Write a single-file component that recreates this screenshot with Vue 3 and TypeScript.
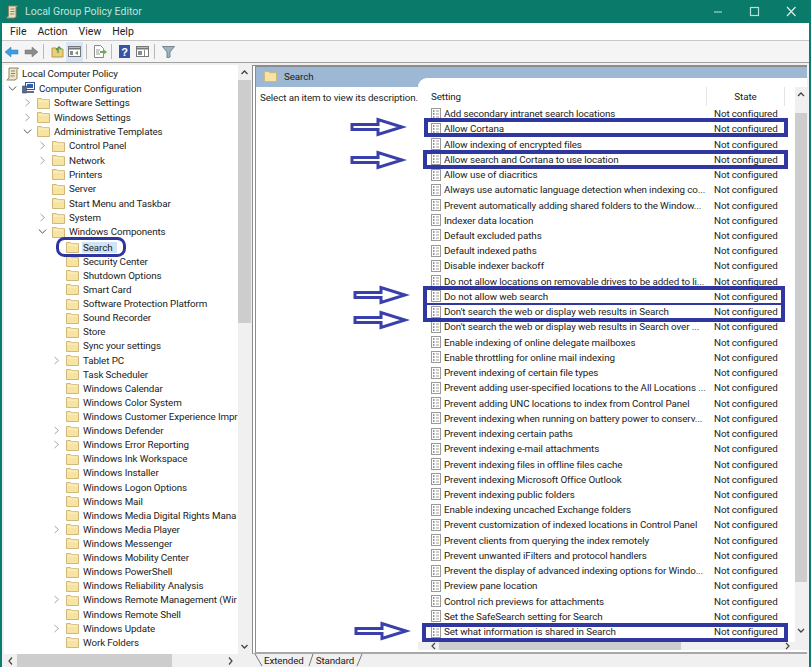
<script setup lang="ts">
interface TreeRow { label: string; depth: number; chevron?: 'open' | 'closed'; icon?: 'scroll' | 'pc' | 'folder'; selected?: boolean }
const closed = 'closed' as const
const open = 'open' as const
const tree: TreeRow[] = [
  { label: 'Local Computer Policy', depth: 0, icon: 'scroll' },
  { label: 'Computer Configuration', depth: 1, chevron: open, icon: 'pc' },
  { label: 'Software Settings', depth: 2, chevron: closed },
  { label: 'Windows Settings', depth: 2, chevron: closed },
  { label: 'Administrative Templates', depth: 2, chevron: open },
  { label: 'Control Panel', depth: 3, chevron: closed },
  { label: 'Network', depth: 3, chevron: closed },
  { label: 'Printers', depth: 3 },
  { label: 'Server', depth: 3 },
  { label: 'Start Menu and Taskbar', depth: 3 },
  { label: 'System', depth: 3, chevron: closed },
  { label: 'Windows Components', depth: 3, chevron: open },
  { label: 'Search', depth: 4, selected: true },
  { label: 'Security Center', depth: 4 },
  { label: 'Shutdown Options', depth: 4 },
  { label: 'Smart Card', depth: 4 },
  { label: 'Software Protection Platform', depth: 4 },
  { label: 'Sound Recorder', depth: 4 },
  { label: 'Store', depth: 4 },
  { label: 'Sync your settings', depth: 4 },
  { label: 'Tablet PC', depth: 4, chevron: closed },
  { label: 'Task Scheduler', depth: 4 },
  { label: 'Windows Calendar', depth: 4 },
  { label: 'Windows Color System', depth: 4 },
  { label: 'Windows Customer Experience Impr', depth: 4 },
  { label: 'Windows Defender', depth: 4, chevron: closed },
  { label: 'Windows Error Reporting', depth: 4, chevron: closed },
  { label: 'Windows Ink Workspace', depth: 4 },
  { label: 'Windows Installer', depth: 4 },
  { label: 'Windows Logon Options', depth: 4 },
  { label: 'Windows Mail', depth: 4 },
  { label: 'Windows Media Digital Rights Mana', depth: 4 },
  { label: 'Windows Media Player', depth: 4, chevron: closed },
  { label: 'Windows Messenger', depth: 4 },
  { label: 'Windows Mobility Center', depth: 4 },
  { label: 'Windows PowerShell', depth: 4 },
  { label: 'Windows Reliability Analysis', depth: 4 },
  { label: 'Windows Remote Management (Wir', depth: 4, chevron: closed },
  { label: 'Windows Remote Shell', depth: 4 },
  { label: 'Windows Update', depth: 4, chevron: closed },
  { label: 'Work Folders', depth: 4 },
]
const settings: string[] = [
  'Add secondary intranet search locations',
  'Allow Cortana',
  'Allow indexing of encrypted files',
  'Allow search and Cortana to use location',
  'Allow use of diacritics',
  'Always use automatic language detection when indexing co...',
  'Prevent automatically adding shared folders to the Window...',
  'Indexer data location',
  'Default excluded paths',
  'Default indexed paths',
  'Disable indexer backoff',
  'Do not allow locations on removable drives to be added to li...',
  'Do not allow web search',
  "Don't search the web or display web results in Search",
  "Don't search the web or display web results in Search over ...",
  'Enable indexing of online delegate mailboxes',
  'Enable throttling for online mail indexing',
  'Prevent indexing of certain file types',
  'Prevent adding user-specified locations to the All Locations ...',
  'Prevent adding UNC locations to index from Control Panel',
  'Prevent indexing when running on battery power to conserv...',
  'Prevent indexing certain paths',
  'Prevent indexing e-mail attachments',
  'Prevent indexing files in offline files cache',
  'Prevent indexing Microsoft Office Outlook',
  'Prevent indexing public folders',
  'Enable indexing uncached Exchange folders',
  'Prevent customization of indexed locations in Control Panel',
  'Prevent clients from querying the index remotely',
  'Prevent unwanted iFilters and protocol handlers',
  'Prevent the display of advanced indexing options for Windo...',
  'Preview pane location',
  'Control rich previews for attachments',
  'Set the SafeSearch setting for Search',
  'Set what information is shared in Search',
]
const arrows: [number, number][] = [[352, 127], [352, 160], [355, 295], [355, 320], [356, 631]]
const boxes: [number, number, number, number][] = [
  [426, 120, 360, 15],
  [425, 152, 361, 15],
  [425, 288, 358, 32],
  [424, 625, 362, 15],
]
</script>

<template>
  <div class="win">
    <header class="title">
      <svg class="ti" width="12" height="14" viewBox="0 0 12 14"><path d="M2.500 1h9L10 2.500v9L8.500 13H.5l2-2z" fill="#e8e0c0" stroke="#8d8666"/><path d="M4.500 4h4M4.500 6.500h4M4 9h4" stroke="#8d8666"/></svg>
      <span class="title-text">Local Group Policy Editor</span>
      <span class="grow"></span>
      <svg class="wb" width="46" height="22" viewBox="0 0 46 22"><path d="M37 11h8" stroke="#9fd4ca" stroke-width="1.200"/></svg>
      <svg class="wb" width="46" height="22" viewBox="0 0 46 22"><rect x="27.500" y="6.500" width="8" height="8" fill="none" stroke="#b5e0d8" stroke-width="1.200"/></svg>
      <svg class="wb" width="42" height="22" viewBox="0 0 42 22"><path d="M18 6l8.500 9M26.500 6L18 15" stroke="#d8efe9" stroke-width="1.200"/></svg>
    </header>
    <nav class="menu"><span>File</span><span>Action</span><span>View</span><span>Help</span></nav>
    <div class="toolbar">
      <svg class="t-back" width="14" height="12" viewBox="0 0 14 12"><path d="M0 6l6-5v3h7v4H6v3z" fill="#3f9ee0" stroke="#2a78b5" stroke-width=".5"/></svg>
      <svg class="t-fwd" width="14" height="12" viewBox="0 0 14 12"><path d="M14 6L8 1v3H1v4h7v3z" fill="#8c8c8c" stroke="#6e6e6e" stroke-width=".5"/></svg>
      <i class="sep s1"></i>
      <svg class="t-up" width="13" height="13" viewBox="0 0 13 13"><path d="M1 3h4l1 1h6v8H1z" fill="#eccf7c" stroke="#b89a4a"/><path d="M7 8V3M5 5l3-3 2 2" stroke="#3f9b4c" fill="none" stroke-width="1.300"/></svg>
      <span class="tb-active"><svg width="13" height="11" viewBox="0 0 13 11"><rect x=".5" y=".5" width="12" height="10" fill="#fff" stroke="#777"/><path d="M1 2.500h11" stroke="#777" stroke-width="2"/><rect x="2" y="5" width="3" height="4" fill="#889"/><path d="M10 5L7 7l3 2z" fill="#5a9a5a"/></svg></span>
      <i class="sep s2"></i>
      <svg class="t-doc" width="14" height="13" viewBox="0 0 14 13"><path d="M1.500.5h6l3 3v9h-9z" fill="#fff" stroke="#888"/><path d="M3 5h4M3 7h3M3 9h4" stroke="#999"/><path d="M7 6h3V4l4 3-4 3V8H7z" fill="#6cae53"/></svg>
      <i class="sep s3"></i>
      <svg class="t-help" width="11" height="13" viewBox="0 0 11 13"><rect width="11" height="13" fill="#3553a8"/><text x="5.500" y="10.500" text-anchor="middle" class="q">?</text></svg>
      <svg class="t-pane" width="13" height="11" viewBox="0 0 13 11"><rect x=".5" y=".5" width="12" height="10" fill="#fff" stroke="#777"/><path d="M1 2.500h11" stroke="#777" stroke-width="2"/><path d="M8.500 4v6" stroke="#888"/><rect x="2" y="5" width="4" height="4" fill="#889"/></svg>
      <i class="sep s4"></i>
      <svg class="t-filter" width="13" height="12" viewBox="0 0 13 12"><path d="M.5.500h12L8 6v5l-3 1V6z" fill="#9ab4c2" stroke="#62747e" stroke-width=".8"/></svg>
    </div>
    <main class="body">
      <aside class="left">
        <div class="tree-wrap">
          <div class="tree">
            <div v-for="r in tree" :key="r.label" class="trow" :class="'d' + r.depth">
              <span class="chev">
                <svg v-if="r.chevron === 'closed'" width="7" height="9" viewBox="0 0 7 9"><path d="M1.500 1l4 3.500-4 3.500" fill="none" stroke="#a6a6a6"/></svg>
                <svg v-else-if="r.chevron === 'open'" width="9" height="7" viewBox="0 0 9 7"><path d="M.8 1.500l3.700 3.700 3.700-3.700" fill="none" stroke="#555"/></svg>
              </span>
              <svg v-if="r.icon === 'scroll'" class="ic" width="13" height="14" viewBox="0 0 13 14"><path d="M3 1h9.500L11 2.500v9L9 13H.8L3 11z" fill="#ede6c8" stroke="#8b8468"/><path d="M5 4h4M5 6.500h4M4.500 9h4" stroke="#8b8468"/></svg>
              <svg v-else-if="r.icon === 'pc'" class="ic" width="13" height="12" viewBox="0 0 13 12"><rect x="3.500" y=".5" width="9" height="7" fill="#fff" stroke="#3b4f88"/><rect x="5" y="2" width="6" height="4" fill="#2b5fbd"/><path d="M.5 4h4v7h-4z" fill="#5a6a90" stroke="#2f3e66" stroke-width=".6"/><path d="M5 10h7" stroke="#5c6c98" stroke-width="2"/></svg>
              <svg v-else class="ic" width="13" height="12" viewBox="0 0 13 12"><path d="M.5 1.500h4l1 1.200h7v8.800H.5z" fill="#f7e4a2" stroke="#cfb878"/><path d="M1.500 4h10" stroke="#fdf4cf"/></svg>
              <span class="tlabel" :class="{ sel: r.selected }">{{ r.label }}</span>
            </div>
          </div>
          <div class="vs">
            <svg class="sa" width="11" height="11" viewBox="0 0 11 11"><path d="M2.500 7l3-3 3 3" fill="none" stroke="#444" stroke-width="1.300"/></svg>
            <div class="vtrack"><div class="vthumb left-thumb"></div></div>
            <svg class="sa" width="11" height="11" viewBox="0 0 11 11"><path d="M2.500 4l3 3 3-3" fill="none" stroke="#444" stroke-width="1.300"/></svg>
          </div>
        </div>
        <div class="hs">
          <svg class="sa" width="13" height="12" viewBox="0 0 13 12"><path d="M8 2.500L5 6l3 3.500" fill="none" stroke="#444" stroke-width="1.200"/></svg>
          <div class="htrack"><div class="hthumb"></div></div>
          <svg class="sa hs-next" width="13" height="12" viewBox="0 0 13 12"><path d="M5 2.500L8 6 5 9.500" fill="none" stroke="#444" stroke-width="1.200"/></svg>
        </div>
      </aside>
      <section class="right">
        <div class="pane">
          <div class="band">
            <svg class="bf" width="13" height="12" viewBox="0 0 13 12"><path d="M.5 1.500h4l1 1.200h7v8.800H.5z" fill="#f7e4a2" stroke="#cfb878"/></svg>
            <span>Search</span>
          </div>
          <div class="content">
            <div class="desc">Select an item to view its description.</div>
            <div class="list">
              <div class="lhead"><span class="hset">Setting</span><span class="hstate">State</span></div>
              <div class="lbody">
                <div class="rows">
                  <div v-for="s in settings" :key="s" class="row">
                    <svg class="pi" width="10" height="12" viewBox="0 0 10 12"><rect x=".5" y=".5" width="9" height="11" fill="#fff" stroke="#9a9a9a"/><path d="M2 3h1.500M2 6h1.500M2 9h1.500" stroke="#333"/><path d="M5 3h3M5 6h3M5 9h3" stroke="#999"/></svg>
                    <span class="sname">{{ s }}</span>
                    <span class="sstate">Not configured</span>
                  </div>
                </div>
                <div class="vs rvs">
                  <svg class="sa" width="12" height="11" viewBox="0 0 12 11"><path d="M3 7l3-3 3 3" fill="none" stroke="#444" stroke-width="1.300"/></svg>
                  <div class="vtrack"><div class="vthumb right-thumb"></div></div>
                  <svg class="sa" width="12" height="11" viewBox="0 0 12 11"><path d="M3 4l3 3 3-3" fill="none" stroke="#444" stroke-width="1.300"/></svg>
                </div>
              </div>
              <div class="lhs">
                <svg width="11" height="8" viewBox="0 0 11 8"><path d="M7 1L4 4l3 3" fill="none" stroke="#444" stroke-width="1.200"/></svg>
                <div class="lhthumb"></div>
                <span class="grow"></span>
                <svg class="lh-next" width="11" height="8" viewBox="0 0 11 8"><path d="M4 1l3 3-3 3" fill="none" stroke="#444" stroke-width="1.200"/></svg>
              </div>
            </div>
          </div>
        </div>
        <div class="tabs">
          <svg class="tabline" width="112" height="13" viewBox="0 0 112 13"><path d="M3 0l7 12M61 0l-4 12M110 0l-5 12" fill="none" stroke="#777"/></svg>
          <span class="tab t1">Extended</span><span class="tab t2">Standard</span>
        </div>
      </section>
    </main>
    <svg class="overlay" width="811" height="667" viewBox="0 0 811 667">
      <rect x="57.500" y="238.500" width="67" height="17" rx="7" fill="none" stroke="#2f349f" stroke-width="3"/>
      <rect v-for="(b, i) in boxes" :key="'b' + i" :x="b[0]" :y="b[1]" :width="b[2]" :height="b[3]" fill="none" stroke="#3137a1" stroke-width="4"/>
      <path d="M424 304h360" stroke="#3137a1" stroke-width="2"/>
      <path v-for="(a, i) in arrows" :key="'a' + i" :d="`M${a[0]} ${a[1] - 2.500}h26v-5l24 7.500-24 7.500v-5h-26z`" fill="#fff" stroke="#3a40ab" stroke-width="3"/>
    </svg>
  </div>
</template>

<style>
html, body { margin: 0; padding: 0; background: #fff; }
</style>

<style scoped>
.win { position: relative; width: 811px; height: 667px; overflow: hidden; display: flex; flex-direction: column; background: #f0f0f0; box-sizing: border-box; border-left: 2px solid #0b7d6f; border-right: 2px solid #0b7d6f; font-family: Roboto, sans-serif; font-size: 9.800px; letter-spacing: -0.100px; color: #222; }
.title { height: 23px; flex: none; background: #0a7b6b; display: flex; align-items: center; margin: 0 -2px 0 -2px; color: #bfe3dc; padding-left: 6px; }
.ti { margin-right: 7px; }
.title-text { font-size: 10.500px; letter-spacing: 0; }
.grow { flex: 1; }
.wb { flex: none; }
.menu { height: 17px; flex: none; background: #fff; display: flex; align-items: center; padding-left: 8px; border-bottom: 1px solid #c8c8c8; }
.menu span { margin-right: 11px; font-size: 10.500px; letter-spacing: 0; }
.toolbar { height: 21px; flex: none; background: #f5f5f5; display: flex; align-items: center; padding-left: 3px; border-bottom: 1px solid #a0a0a0; }
.t-fwd { margin-left: 5px; }
.s1 { margin-left: 5px; }
.t-up { margin-left: 7px; }
.tb-active { background: #d6e6f4; height: 20px; width: 17px; margin-left: 2px; display: flex; align-items: center; justify-content: center; }
.s2 { margin-left: 3px; }
.t-doc { margin-left: 6px; }
.s3 { margin-left: 4px; }
.t-help { margin-left: 7px; }
.t-pane { margin-left: 6px; }
.s4 { margin-left: 5px; }
.t-filter { margin-left: 7px; }
.sep { width: 1px; height: 15px; background: #b8b8b8; }
.q { font-size: 11px; font-weight: 700; fill: #fff; font-family: "Liberation Sans", sans-serif; }
.body { flex: 1; min-height: 0; display: flex; gap: 1px; background: #f0f0f0; }
.left { width: 247px; flex: none; margin: 2px 0 0 2px; background: #fff; display: flex; flex-direction: column; }
.tree-wrap { flex: 1; display: flex; min-height: 0; }
.tree { flex: 1; padding-top: 1.800px; min-width: 0; overflow: hidden; }
.trow { height: 14.120px; display: flex; align-items: center; white-space: nowrap; }
.trow:nth-child(-n+12) { height: 14.370px; }
.trow:nth-child(13) { margin-top: 1px; }
.chev { width: 14px; flex: none; display: flex; justify-content: center; margin-right: 3px; }
.d0 { padding-left: 2px; }
.d0 .chev { display: none; }
.d1 { padding-left: 1px; }
.d2 { padding-left: 16px; }
.d3 { padding-left: 31px; }
.d4 { padding-left: 45px; }
.ic { flex: none; margin-right: 3px; }
.d0 .ic { margin-right: 2px; }
.tlabel { padding: 0 2px 0 1px; }
.sel { background: #cfe5f7; padding-right: 4px; }
.vs { width: 13px; flex: none; background: #f0f0f0; display: flex; flex-direction: column; align-items: center; }
.sa { flex: none; margin: 2px 0; }
.vtrack { flex: 1; width: 100%; min-height: 0; }
.vthumb { width: 100%; background: #cdcdcd; }
.left-thumb { height: 243px; }
.hs { height: 13px; flex: none; background: #f0f0f0; display: flex; align-items: center; }
.htrack { flex: 1; height: 100%; }
.hthumb { width: 155px; height: 100%; background: #cdcdcd; }
.hs-next { margin-right: 14px; }
.right { flex: 1; min-width: 0; display: flex; flex-direction: column; margin: 2px 2px 0 0; }
.pane { flex: 1; min-height: 0; border-top: 2px solid #8c8c8c; border-bottom: 2px solid #a8a8a8; border-left: 4px double #8c8c8c; display: flex; flex-direction: column; background: #fff; }
.band { height: 20px; flex: none; background: #9db8d5; display: flex; align-items: center; padding-left: 8px; gap: 7px; box-sizing: border-box; padding-bottom: 2px; }
.content { flex: 1; min-height: 0; display: flex; background: #fff; }
.desc { width: 162px; flex: none; padding: 5px 0 0 4px; white-space: nowrap; box-sizing: border-box; }
.list { flex: 1; min-width: 0; margin-top: -9px; background: #fff; border-top-left-radius: 9px; position: relative; display: flex; flex-direction: column; }
.lhead { height: 28px; flex: none; display: flex; align-items: stretch; box-sizing: border-box; }
.hset { padding: 13px 0 0 13px; width: 288px; flex: none; box-sizing: border-box; }
.hstate { width: 79px; flex: none; box-sizing: border-box; text-align: center; border-left: 1px solid #e4e4e4; border-right: 1px solid #e4e4e4; margin-top: 9px; padding-top: 4px; }
.lbody { flex: 1; min-height: 0; display: flex; }
.rows { flex: 1; min-width: 0; overflow: hidden; }
.row { height: 15.240px; display: flex; align-items: center; white-space: nowrap; padding-left: 13px; }
.pi { flex: none; margin-right: 3px; }
.sname { width: 270px; flex: none; overflow: hidden; }
.rvs { width: 12px; margin-top: -19px; }
.rvs .sa:last-child { margin-bottom: 6px; }
.right-thumb { height: 469px; margin-top: 11px; }
.lhs { height: 8px; flex: none; background: #f0f0f0; margin-bottom: 2px; display: flex; align-items: center; padding-left: 10px; }
.lhthumb { height: 100%; width: 242px; background: #cdcdcd; }
.lh-next { margin-right: 14px; }
.tabs { height: 13px; flex: none; display: flex; align-items: center; position: relative; padding-left: 12px; gap: 12px; }
.tabline { position: absolute; left: 0; top: 0; }
.tab { position: relative; }
.overlay { position: absolute; left: -2px; top: 0; pointer-events: none; }
</style>
